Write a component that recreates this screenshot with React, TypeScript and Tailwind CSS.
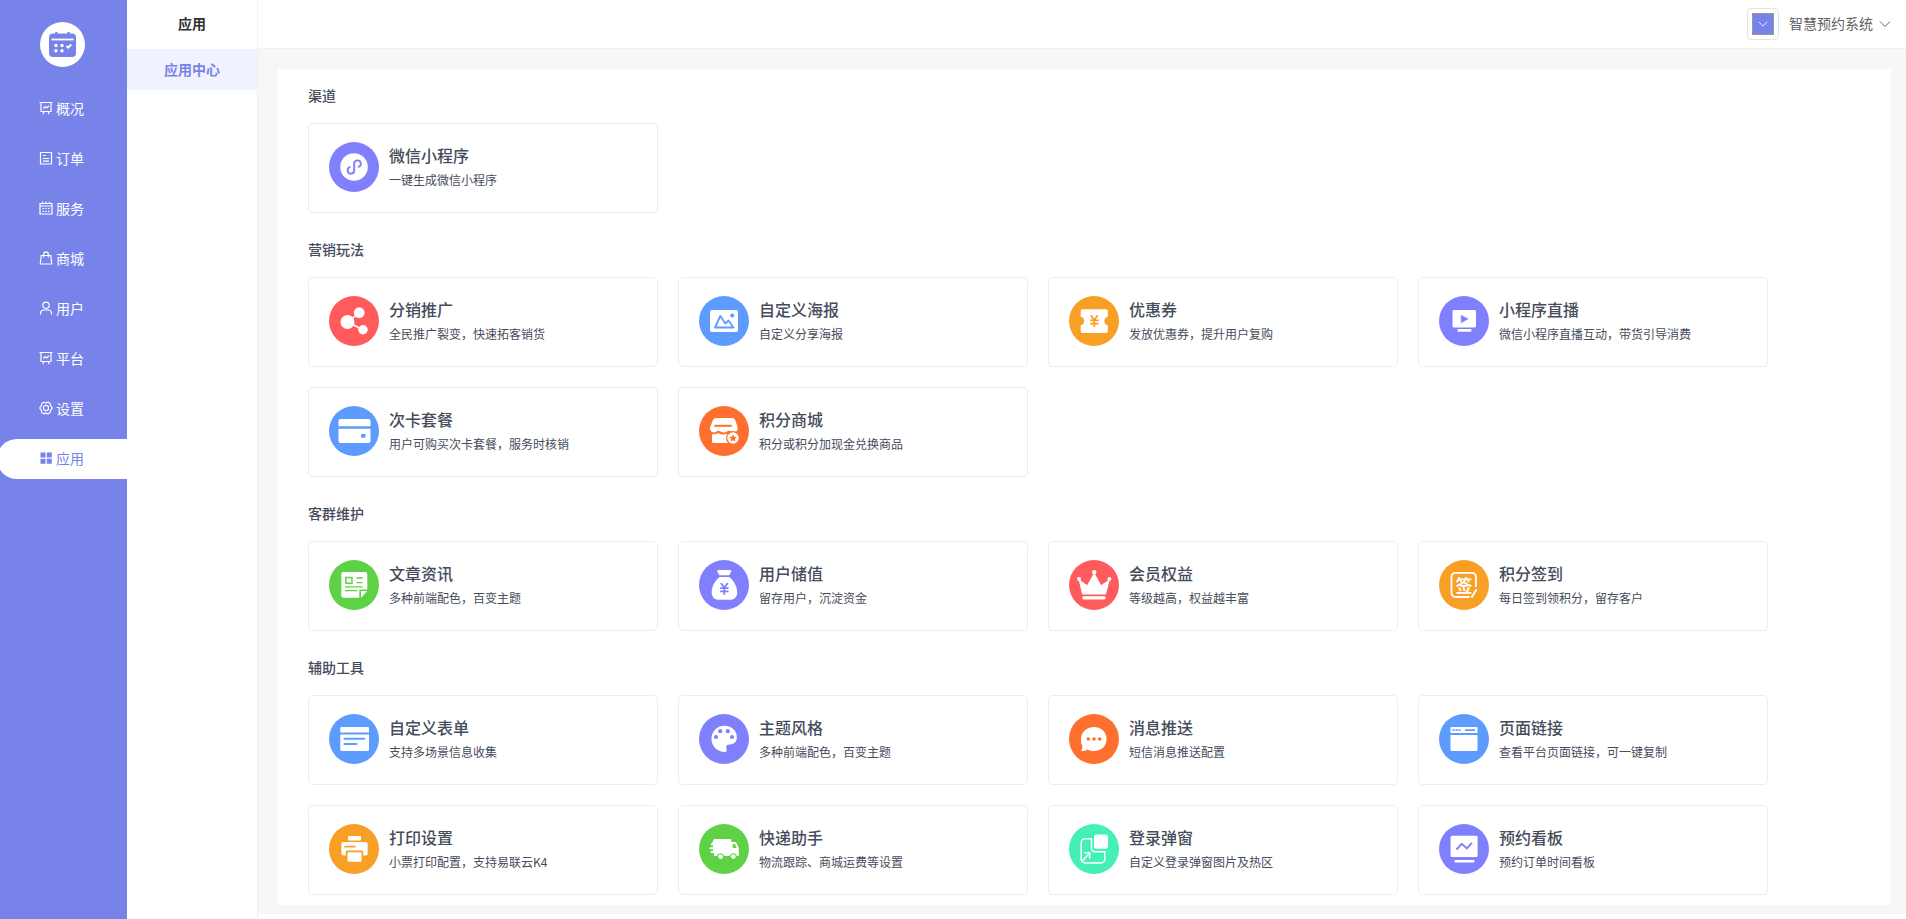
import React from 'react';
import { clsx } from 'clsx';

type IconProps = { className?: string };

/* ---------- sidebar icons ---------- */

const Line = ({ children }: { children: React.ReactNode }) => (
  <svg viewBox="0 0 14 14" className="size-[14px]" fill="none" stroke="currentColor" strokeWidth="1.200">
    {children}
  </svg>
);

const BoardIcon = () => (
  <Line>
    <path d="M.5 1.500h13M2 1.500v9h10v-9M4.300 7.500l1.900-2 1.500 1.500L10 4.800M5 10.500l-1.300 2.800M9 10.500l1.300 2.800" />
  </Line>
);
const OrderIcon = () => (
  <Line>
    <path d="M1.500 1.500h11v11.500h-11zM4 4.500h3M4 7.500h6M4 10.200h6" />
  </Line>
);
const ServiceIcon = () => (
  <Line>
    <path d="M1 2.500h12v10.500H1zM1 5h12M3.500 .8v2M7 .8v2M10.500 .8v2" />
    <path d="M3.500 7.500h1.500M6.200 7.500h1.500M9 7.500h1.500M3.500 10.300h1.500M6.200 10.300h1.500M9 10.300h1.500" />
  </Line>
);
const BagIcon = () => (
  <Line>
    <path d="M2.200 4.500h9.600l.9 8.500H1.300zM4.700 6.500V3.200a2.300 2.300 0 0 1 4.600 0v3.300" />
  </Line>
);
const UserIcon = () => (
  <Line>
    <circle cx="7" cy="4.300" r="3.200" />
    <path d="M1.500 13.500v-1.200c0-2 1.500-3.300 3.500-3.300h4c2 0 3.500 1.300 3.500 3.300v1.200" />
  </Line>
);
const SettingIcon = () => (
  <Line>
    <path d="M4.800 1.200 7 1.900l2.200-.7 2 1.300.4 2.200 1.500 1.700v1.200l-1.500 1.700-.4 2.200-2 1.300L7 12.100l-2.200.7-2-1.300-.4-2.200L.9 7.600V6.400l1.500-1.700.4-2.200z" />
    <circle cx="7" cy="7" r="2.600" />
  </Line>
);
const AppsIcon = () => (
  <svg viewBox="0 0 14 14" className="size-[14px]" fill="currentColor">
    <path d="M1.500 1.500h5v5h-5zM7.800 1.500h5v5h-5zM1.500 7.800h5v5h-5zM7.800 7.800h5v5h-5z" />
  </svg>
);

const Logo = () => (
  <svg viewBox="0 0 45 45" className="size-[45px]">
    <circle cx="22.500" cy="22.500" r="22.500" fill="#fff" />
    <path d="M13 11.500h2.200V10h2.300v1.500h10V10h2.300v1.500H32a4 4 0 0 1 4 4V31a4 4 0 0 1-4 4H13a4 4 0 0 1-4-4V15.500a4 4 0 0 1 4-4z" fill="#7883ea" />
    <path d="M11.500 17.500h22" stroke="#fff" strokeWidth="1.800" />
    <g fill="#fff">
      <circle cx="16" cy="23.500" r="1.700" />
      <circle cx="22" cy="23.500" r="1.700" />
      <circle cx="16" cy="28.700" r="1.700" />
      <circle cx="22" cy="28.700" r="1.700" />
    </g>
    <path d="m26.500 24 1.900 1.600 2.800-3.200" fill="none" stroke="#fff" strokeWidth="2" />
  </svg>
);

const ChevronDown = ({ className }: IconProps) => (
  <svg viewBox="0 0 12 12" className={className} fill="none" stroke="currentColor">
    <path d="m1 3.500 5 5 5-5" />
  </svg>
);

/* ---------- app icons: white on the disc, currentColor for the cut-outs ---------- */

const Yuan = ({ x, y }: { x: number; y: number }) => (
  <path
    transform={`translate(${x} ${y})`}
    d="m-3.500-5.800 3.500 4.800 3.500-4.800M0-1v7M-4.200-.6h8.400M-4.200 2.600h8.400"
    fill="none"
    stroke="currentColor"
    strokeWidth="1.800"
  />
);

const icons: Record<string, React.ReactNode> = {
  mini: (
    <>
      <circle cx="25" cy="25" r="13.800" />
      <path d="M20.800 25.200a3.300 3.300 0 1 0 4.400 3.200v-6.800a3.300 3.300 0 1 1 4.400 3.200" fill="none" stroke="currentColor" strokeWidth="1.900" strokeLinecap="round" />
    </>
  ),
  share: (
    <>
      <path d="m19 26 11-9M19 26l15 8" stroke="#fff" strokeWidth="1.600" />
      <circle cx="18.500" cy="26" r="7" />
      <circle cx="30.200" cy="16.700" r="5.400" />
      <circle cx="34" cy="33.700" r="4.700" />
    </>
  ),
  poster: (
    <>
      <rect x="11" y="14" width="28" height="22" rx="2" />
      <path d="m16 31.500 5.300-11.500 5 7.500 3.200-3 5 7z" fill="none" stroke="currentColor" strokeWidth="1.800" strokeLinejoin="round" />
      <circle cx="33.200" cy="19.400" r="2" fill="currentColor" />
    </>
  ),
  coupon: (
    <>
      <path d="M13.500 13.300h23.500a1.800 1.800 0 0 1 1.800 1.800v5.600a4.400 4.400 0 0 0 0 8.600v6a1.800 1.800 0 0 1-1.800 1.800H13.500a1.800 1.800 0 0 1-1.800-1.800v-6a4.400 4.400 0 0 0 0-8.600v-5.600a1.800 1.800 0 0 1 1.800-1.800z" />
      <Yuan x={25.300} y={25} />
    </>
  ),
  live: (
    <>
      <rect x="13.500" y="14" width="23.500" height="17.500" rx="1.500" />
      <path d="m22.200 19.300 6.800 3.600-6.800 3.800z" fill="currentColor" stroke="currentColor" strokeLinejoin="round" strokeWidth=".6" />
      <rect x="18.500" y="33" width="14" height="2.800" rx="1" />
    </>
  ),
  card: (
    <>
      <path d="M11.500 13h28a2 2 0 0 1 2 2v5.300h-32V15a2 2 0 0 1 2-2zM9.500 22.700h32V35a2 2 0 0 1-2 2h-28a2 2 0 0 1-2-2z" />
      <rect x="32.200" y="28" width="4.300" height="3.700" fill="currentColor" />
    </>
  ),
  shop: (
    <>
      <path d="M18 12h15a4 4 0 0 1 3.500 2.400l2.300 7.600c0 2.700-1.800 4.400-4.200 4.400-1.800 0-2.600-1.700-4.400-1.700s-2.500 1.700-5.400 1.700-3.600-1.700-5.400-1.700-2.200 1.700-4.400 1.700c-2.500 0-4.200-1.900-4.200-4.400l2.900-7.600A4.500 4.500 0 0 1 18 12z" />
      <path d="M13 28.300c2.500.1 4.600-.2 6.200-1.300 3 2 7 2 10.600.2L31 37H14.500a1.500 1.500 0 0 1-1.500-1.500z" />
      <path d="M15.300 19.800h17.500" stroke="currentColor" strokeWidth="2" />
      <circle cx="34" cy="32" r="6.300" stroke="currentColor" strokeWidth="1.200" />
      <path d="m34 28.300 1.200 2.400 2.600.3-1.900 1.800.5 2.600-2.400-1.200-2.400 1.200.5-2.600-1.900-1.800 2.600-.3z" fill="currentColor" />
    </>
  ),
  article: (
    <>
      <path d="M14.300 12h22a2 2 0 0 1 2 2v15.500h-8v8.200h-16a2 2 0 0 1-2-2V14a2 2 0 0 1 2-2z" />
      <path d="M32 31h6.300L32 37.700z" />
      <path d="M16.800 17.500h6.200v5.800h-6.200zM27.500 18h6M27.500 22.600h6M16 26.900h17.500M16 30.600h12.500" fill="none" stroke="currentColor" strokeWidth="1.400" />
    </>
  ),
  purse: (
    <>
      <path d="M19.500 10h11.600a1.200 1.200 0 0 1 1 1.800l-1.300 2.700a1.500 1.500 0 0 1-1.300.8h-8.400a1.500 1.500 0 0 1-1.300-.8l-1.400-2.700a1.200 1.200 0 0 1 1.100-1.800z" />
      <path d="M20.500 17h9.800c4.700 3.700 7.900 9.800 7.900 15.400 0 4.600-3 7.300-7.400 7.300H20c-4.400 0-7.300-2.700-7.300-7.300 0-5.600 3.100-11.700 7.800-15.400z" />
      <Yuan x={25.300} y={28.800} />
    </>
  ),
  crown: (
    <>
      <path d="m10.300 20 8 5.800 6.900-12.300L32 25.800l8.200-5.800L36.500 34h-23z" stroke="#fff" strokeLinejoin="round" />
      <circle cx="10" cy="19" r="2" />
      <circle cx="25.200" cy="12.200" r="2.200" />
      <circle cx="40.400" cy="19" r="2" />
      <rect x="13.500" y="36.300" width="23" height="3.200" rx="1.200" />
    </>
  ),
  sign: (
    <>
      <path d="M30.500 37H16.200a3.700 3.700 0 0 1-3.700-3.700V16.500a3.700 3.700 0 0 1 3.700-3.700h17a3.700 3.700 0 0 1 3.700 3.700V27" fill="none" stroke="#fff" strokeWidth="1.800" />
      <path d="m37.500 29.500-5 8" stroke="#fff" strokeWidth="2" />
      <text x="25" y="31.500" fontSize="17" fontWeight="700" textAnchor="middle">签</text>
    </>
  ),
  form: (
    <>
      <path d="M12.300 13H39a1 1 0 0 1 1 1v4.500H11.300V14a1 1 0 0 1 1-1zM11.300 20.500H40v15a1.500 1.500 0 0 1-1.500 1.500H12.800a1.500 1.500 0 0 1-1.500-1.500z" />
      <path d="M15.500 24.800h19.800M15.500 30.100h12" stroke="currentColor" strokeWidth="2" strokeLinecap="round" />
    </>
  ),
  theme: (
    <>
      <path d="M25.200 11.800c7 0 12.700 4.700 12.700 11.500 0 5-3.600 7.300-7.600 7.300-2.600 0-3.600 1.600-3 3.600.5 1.700.7 3.900-1.300 3.900-7.800 0-13.500-5.700-13.500-13 0-7.700 5.700-13.300 12.700-13.300z" />
      <g fill="currentColor">
        <circle cx="21.200" cy="17.200" r="2.100" />
        <circle cx="28.800" cy="17.200" r="2.100" />
        <circle cx="17" cy="23" r="2.100" />
        <circle cx="33" cy="23" r="2.100" />
      </g>
    </>
  ),
  message: (
    <>
      <path d="M25 13c7.300 0 12.600 5 12.600 12S32.300 37 25 37c-2.400 0-4.400-.6-6.300-1.600-1.800 1-4 1.600-6.600 1.600 1-1.500 1.500-3.200 1.200-4.900A12 12 0 0 1 12 25c0-7 5.700-12 13-12z" />
      <g fill="currentColor">
        <circle cx="19.300" cy="25" r="1.800" />
        <circle cx="25" cy="25" r="1.800" />
        <circle cx="30.700" cy="25" r="1.800" />
      </g>
    </>
  ),
  page: (
    <>
      <path d="M12.500 13h25a1 1 0 0 1 1 1v5h-27v-5a1 1 0 0 1 1-1zM11.500 21h27v14.700a1.300 1.300 0 0 1-1.300 1.300H12.800a1.300 1.300 0 0 1-1.300-1.300z" />
      <path d="M13.500 16.200h2M16.500 16.200h2M19.500 16.200h2M26 16.200h10" stroke="currentColor" strokeWidth="1.800" />
    </>
  ),
  print: (
    <>
      <rect x="19" y="12" width="13" height="4.400" rx="1" />
      <path d="M14.300 18h22.400a2 2 0 0 1 2 2v9.500a2 2 0 0 1-2 2h-2.500V28a1.500 1.500 0 0 0-1.500-1.500H18.300a1.500 1.500 0 0 0-1.500 1.500v3.500h-2.500a2 2 0 0 1-2-2V20a2 2 0 0 1 2-2z" />
      <path d="M16 22.700h10" stroke="currentColor" strokeWidth="1.700" strokeLinecap="round" />
      <rect x="18.500" y="28.200" width="14" height="9.600" rx="1" />
    </>
  ),
  truck: (
    <>
      <path d="M15 15h16a1.300 1.300 0 0 1 1.300 1.300V18h3.500c.8 0 1.400.4 1.800 1.200l2.200 4.800v8h-2a3.600 3.600 0 0 0-7 0H25a3.600 3.600 0 0 0-7 0h-3v-3h-2.500a1 1 0 0 1 0-2H14v-1.800h-2.500a1 1 0 0 1 0-2H14v-2h-1.300a1 1 0 0 1 0-2H13z" />
      <path d="M33.800 20h2.200l1.700 4h-3.900z" fill="currentColor" />
      <circle cx="21.500" cy="32.600" r="2.400" />
      <circle cx="34.300" cy="32.600" r="2.400" />
    </>
  ),
  popup: (
    <>
      <rect x="25" y="10.500" width="14" height="14.300" rx="2.500" />
      <path d="M22.500 14.700h-6.300a4 4 0 0 0-4 4V35a4 4 0 0 0 4 4h15.600a4 4 0 0 0 4-4v-7.300H26a3.500 3.500 0 0 1-3.500-3.500zM13 37.500l7.500-8.500M15.500 28.800h5.200v6" fill="none" stroke="#fff" strokeWidth="1.500" />
    </>
  ),
  kanban: (
    <>
      <rect x="11.600" y="11.800" width="27" height="21.200" rx="1.500" />
      <path d="m18 25 4.800-5.200 5 4.600 4.700-5" fill="none" stroke="currentColor" strokeWidth="2" strokeLinecap="round" />
      <rect x="15.500" y="36" width="20" height="2.600" rx=".8" />
    </>
  ),
};

const navItems = [
  { label: '概况', Icon: BoardIcon },
  { label: '订单', Icon: OrderIcon },
  { label: '服务', Icon: ServiceIcon },
  { label: '商城', Icon: BagIcon },
  { label: '用户', Icon: UserIcon },
  { label: '平台', Icon: BoardIcon },
  { label: '设置', Icon: SettingIcon },
  { label: '应用', Icon: AppsIcon, active: true },
];

const PURPLE = 'text-[#8080ff]';
const RED = 'text-[#ff5b5c]';
const BLUE = 'text-[#5e9bff]';
const AMBER = 'text-[#f89f26]';
const ORANGE = 'text-[#ff6f2d]';
const GREEN = 'text-[#5fd147]';
const MINT = 'text-[#45f0b4]';

const sections = [
  {
    title: '渠道',
    apps: [{ name: '微信小程序', desc: '一键生成微信小程序', icon: 'mini', color: PURPLE }],
  },
  {
    title: '营销玩法',
    apps: [
      { name: '分销推广', desc: '全民推广裂变，快速拓客销货', icon: 'share', color: RED },
      { name: '自定义海报', desc: '自定义分享海报', icon: 'poster', color: BLUE },
      { name: '优惠券', desc: '发放优惠券，提升用户复购', icon: 'coupon', color: AMBER },
      { name: '小程序直播', desc: '微信小程序直播互动，带货引导消费', icon: 'live', color: PURPLE },
      { name: '次卡套餐', desc: '用户可购买次卡套餐，服务时核销', icon: 'card', color: BLUE },
      { name: '积分商城', desc: '积分或积分加现金兑换商品', icon: 'shop', color: ORANGE },
    ],
  },
  {
    title: '客群维护',
    apps: [
      { name: '文章资讯', desc: '多种前端配色，百变主题', icon: 'article', color: GREEN },
      { name: '用户储值', desc: '留存用户，沉淀资金', icon: 'purse', color: PURPLE },
      { name: '会员权益', desc: '等级越高，权益越丰富', icon: 'crown', color: RED },
      { name: '积分签到', desc: '每日签到领积分，留存客户', icon: 'sign', color: AMBER },
    ],
  },
  {
    title: '辅助工具',
    apps: [
      { name: '自定义表单', desc: '支持多场景信息收集', icon: 'form', color: BLUE },
      { name: '主题风格', desc: '多种前端配色，百变主题', icon: 'theme', color: PURPLE },
      { name: '消息推送', desc: '短信消息推送配置', icon: 'message', color: ORANGE },
      { name: '页面链接', desc: '查看平台页面链接，可一键复制', icon: 'page', color: BLUE },
      { name: '打印设置', desc: '小票打印配置，支持易联云K4', icon: 'print', color: AMBER },
      { name: '快递助手', desc: '物流跟踪、商城运费等设置', icon: 'truck', color: GREEN },
      { name: '登录弹窗', desc: '自定义登录弹窗图片及热区', icon: 'popup', color: MINT },
      { name: '预约看板', desc: '预约订单时间看板', icon: 'kanban', color: PURPLE },
    ],
  },
];

type AppItem = (typeof sections)[number]['apps'][number];

const AppCard = ({ name, desc, icon, color }: AppItem) => (
  <a
    href="#"
    className="flex h-[90px] w-[350px] items-start gap-[10px] rounded-[5px] border border-[#ededed] px-5 pt-[18px] hover:shadow-md"
  >
    <svg viewBox="0 0 50 50" className={clsx('size-[50px] shrink-0', color)} fill="#fff">
      <circle cx="25" cy="25" r="25" fill="currentColor" />
      {icons[icon]}
    </svg>
    <div className="text-[#464c5b]">
      <h3 className="text-base leading-[26px] font-medium">{name}</h3>
      <p className="text-xs leading-6">{desc}</p>
    </div>
  </a>
);

const Sidebar = () => (
  <aside className="flex w-[127px] shrink-0 flex-col overflow-hidden bg-[#7883ea] pt-[22px]">
    <a href="#" aria-label="首页" className="ml-10 size-[45px]">
      <Logo />
    </a>
    <nav className="mt-[22px] flex flex-col gap-[10px]">
      {navItems.map(({ label, Icon, active }) => (
        <a
          key={label}
          href="#"
          className={clsx(
            '-ml-[3px] flex h-10 items-center gap-[3px] rounded-l-full pb-[2px] pl-[42px] text-sm',
            active ? 'bg-white text-[#7883ea]' : 'text-white'
          )}
        >
          <Icon />
          {label}
        </a>
      ))}
    </nav>
  </aside>
);

export default function App() {
  return (
    <div className="flex min-h-screen bg-white font-['Noto_Sans_CJK_SC',sans-serif]">
      <Sidebar />

      <aside className="w-[131px] shrink-0 border-r border-[#f0f0f0] text-center text-sm">
        <h2 className="h-[49px] leading-[46px] font-bold text-[#303133]">应用</h2>
        <a href="#" className="block h-[41px] bg-[#f0f3fe] leading-10 font-bold text-[#7883ea]">
          应用中心
        </a>
      </aside>

      <div className="min-w-0 flex-1">
        <header className="flex h-[49px] items-center justify-end gap-[10px] border-b border-[#f0f0f0] pr-[15px]">
          <button type="button" aria-label="店铺" className="flex size-8 items-center justify-center rounded border border-[#e3e3e3]">
            <span className="flex size-[22px] items-center justify-center border border-[#999] bg-[#7883ea] text-white">
              <ChevronDown className="size-[10px]" />
            </span>
          </button>
          <button type="button" className="flex items-center gap-[6px] text-sm text-[#606266]">
            <span className="pb-[2px]">智慧预约系统</span>
            <ChevronDown className="size-3" />
          </button>
        </header>

        <main className="bg-[#f7f7f7] pt-5 pr-[15px] pb-[9px] pl-5">
          <div className="flex flex-col gap-5 bg-white px-[30px] py-[10px]">
            {sections.map((section) => (
              <section key={section.title}>
                <h2 className="mb-3 text-sm leading-8 font-medium text-[#464c5b]">{section.title}</h2>
                <div className="flex flex-wrap gap-5">
                  {section.apps.map((app) => (
                    <AppCard key={app.name} {...app} />
                  ))}
                </div>
              </section>
            ))}
          </div>
        </main>
      </div>
    </div>
  );
}
